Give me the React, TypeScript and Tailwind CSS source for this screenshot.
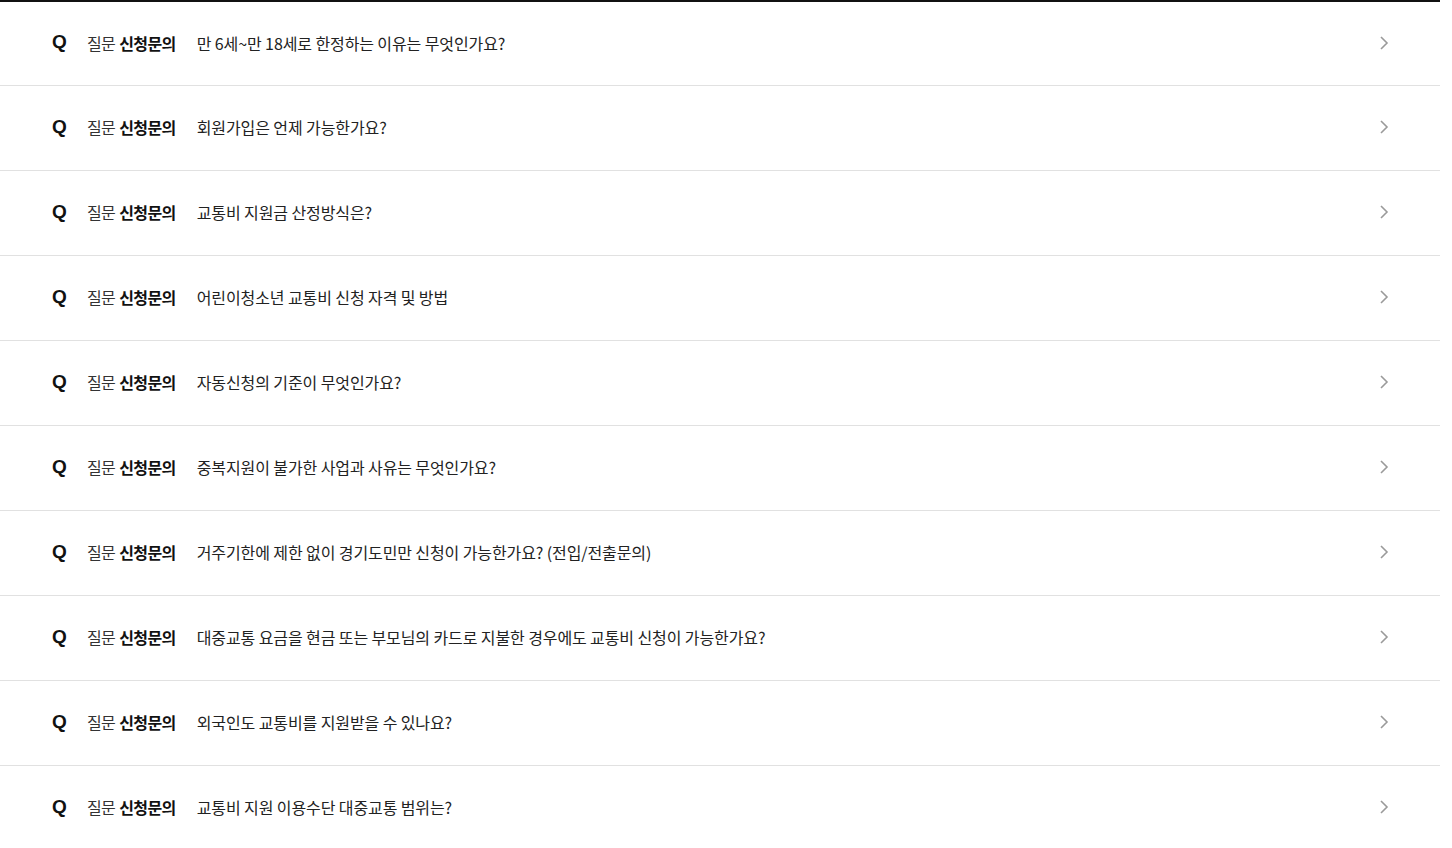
import React from "react";

const items = [
  "만 6세~만 18세로 한정하는 이유는 무엇인가요?",
  "회원가입은 언제 가능한가요?",
  "교통비 지원금 산정방식은?",
  "어린이청소년 교통비 신청 자격 및 방법",
  "자동신청의 기준이 무엇인가요?",
  "중복지원이 불가한 사업과 사유는 무엇인가요?",
  "거주기한에 제한 없이 경기도민만 신청이 가능한가요? (전입/전출문의)",
  "대중교통 요금을 현금 또는 부모님의 카드로 지불한 경우에도 교통비 신청이 가능한가요?",
  "외국인도 교통비를 지원받을 수 있나요?",
  "교통비 지원 이용수단 대중교통 범위는?",
];

export default function App() {
  return (
    <div
      className="w-[1440px] bg-white"
      style={{ fontFamily: '"Noto Sans CJK KR", "Noto Sans", sans-serif' }}
    >
      <ul className="border-t-2 border-[#111]">
        {items.map((q, i) => (
          <li
            key={i}
            className="flex h-[85px] items-center border-b border-[#e1e1e1] pb-[2px] pl-[52px] pr-[50px] first:h-[84px]"
          >
            <span className="w-[35px] text-[19px] font-bold text-[#111]" style={{ fontFamily: '"Liberation Sans", Arial, sans-serif' }}>
              Q
            </span>
            <span className="text-[16px] tracking-[-0.6px] text-[#333]">질문</span>
            <span className="ml-[4px] text-[16px] font-bold tracking-[-0.6px] text-[#111]">신청문의</span>
            <span className="ml-[21px] flex-1 text-[16px] tracking-[-0.1px] text-[#222]">{q}</span>
            <svg width="12" height="16" viewBox="0 0 12 16">
              <path d="M3 2 L9 8 L3 14" fill="none" stroke="#9a9a9a" strokeWidth="1.6" />
            </svg>
          </li>
        ))}
      </ul>
    </div>
  );
}
